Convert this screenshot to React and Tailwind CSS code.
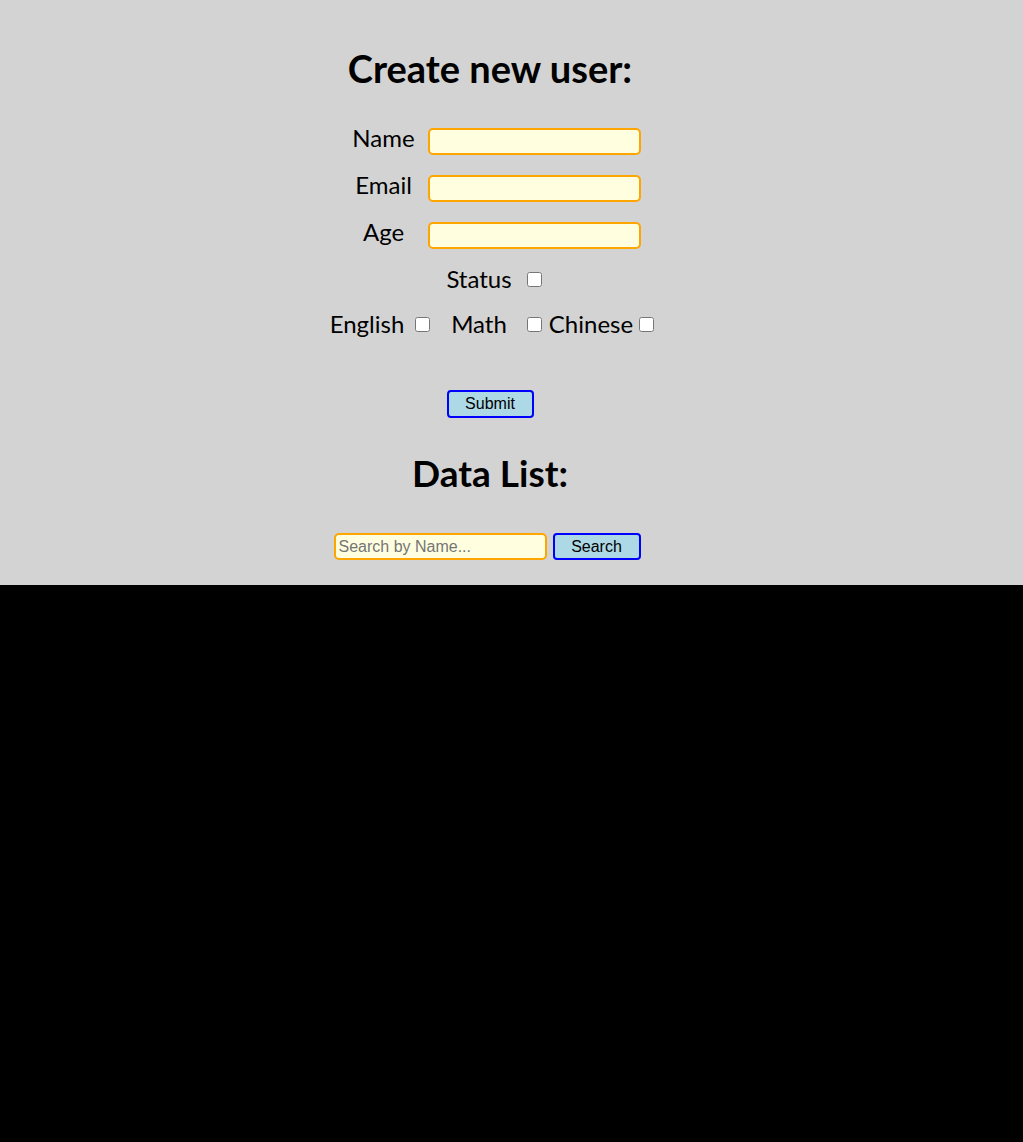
import { useState } from "react";

const labelFont = { fontFamily: "Lato, 'Noto Sans', sans-serif" };

function FieldRow({ label, name, value, onChange }) {
  return (
    <div className="flex h-[47px] items-start">
      <label className="-mt-[2px] w-[88px] text-center text-[24px] leading-[24px]">{label}</label>
      <input
        name={name}
        value={value}
        onChange={onChange}
        className="h-[27px] w-[213px] rounded-[5px] border-2 border-[orange] bg-[lightyellow] px-1 text-[16px] outline-none"
      />
    </div>
  );
}

function CheckCell({ label }) {
  return (
    <div className="flex w-[112px] items-center">
      <span className="w-[90px] text-center text-[24px] leading-[24px]">{label}</span>
      <input type="checkbox" className="ml-[3px] h-[15px] w-[15px]" />
    </div>
  );
}

export default function App() {
  const [form, setForm] = useState({ name: "", email: "", age: "" });
  const [search, setSearch] = useState("");

  const handleChange = (event) => {
    const { name, value } = event.target;
    setForm((current) => ({ ...current, [name]: value }));
  };

  return (
    <div className="min-h-[1142px] bg-black">
      <div className="flex h-[585px] flex-col items-center bg-[lightgray] pr-[43px] text-black" style={labelFont}>
        <h1 className="mt-[48px] text-[38px] font-bold leading-[40px]">Create new user:</h1>

        <form className="mt-[40px] flex flex-col items-center" onSubmit={(e) => e.preventDefault()}>
          <FieldRow label="Name" name="name" value={form.name} onChange={handleChange} />
          <FieldRow label="Email" name="email" value={form.email} onChange={handleChange} />
          <FieldRow label="Age" name="age" value={form.age} onChange={handleChange} />

          <div className="-mt-[2px] flex h-[45px] items-start">
            <div className="w-[112px]" />
            <CheckCell label="Status" />
            <div className="w-[112px]" />
          </div>
          <div className="flex h-[45px] items-start">
            <CheckCell label="English" />
            <CheckCell label="Math" />
            <CheckCell label="Chinese" />
          </div>

          <button
            type="submit"
            className="mt-[33px] h-[28px] w-[87px] rounded-[4px] border-2 border-[blue] bg-[lightblue] text-[16px]"
            style={{ fontFamily: "'Liberation Sans', Arial, sans-serif" }}
          >
            Submit
          </button>
        </form>

        <h2 className="mt-[35px] text-[37px] font-bold leading-[40px]">Data List:</h2>

        <div className="mt-[40px] mr-[6px] flex gap-[6px]" style={{ fontFamily: "'Liberation Sans', Arial, sans-serif" }}>
          <input
            value={search}
            onChange={(e) => setSearch(e.target.value)}
            placeholder="Search by Name..."
            className="h-[27px] w-[213px] rounded-[5px] border-2 border-[orange] bg-[lightyellow] px-[3px] text-[16px] outline-none placeholder:text-[#757575]"
          />
          <button className="h-[27px] w-[88px] rounded-[4px] border-2 border-[blue] bg-[lightblue] text-[16px]">
            Search
          </button>
        </div>
      </div>
    </div>
  );
}
